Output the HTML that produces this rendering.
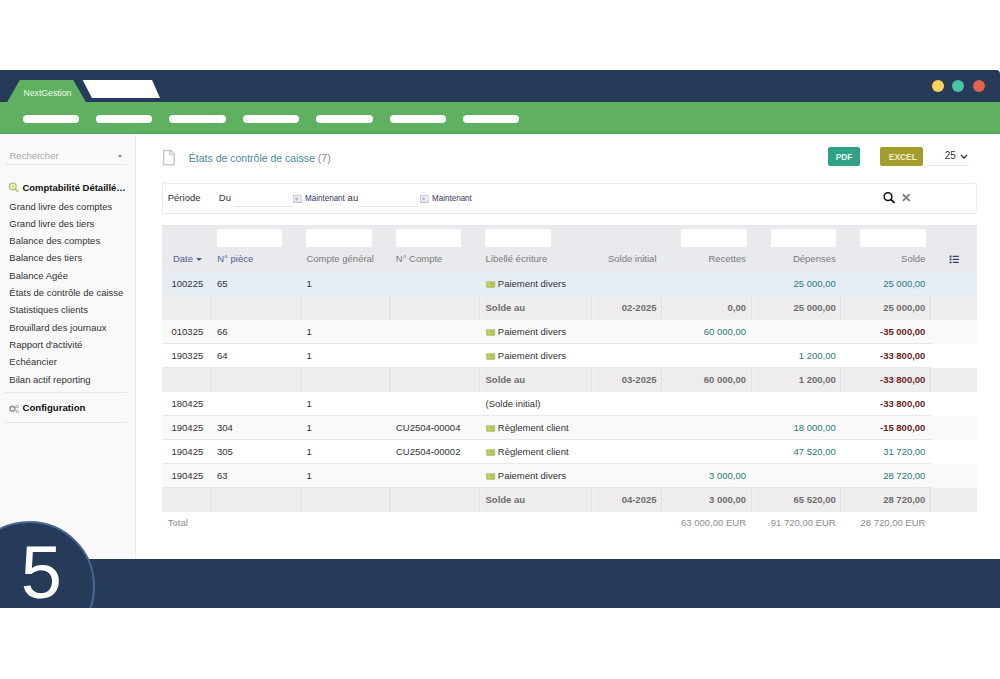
<!DOCTYPE html>
<html><head><meta charset="utf-8"><style>
*{box-sizing:border-box}
html,body{margin:0;padding:0}
body{width:1000px;height:679px;background:#fff;position:relative;overflow:hidden;font-family:"Liberation Sans",sans-serif;color:#333}
.a{position:absolute}
.t{position:absolute;line-height:1;white-space:nowrap}
.pill{position:absolute;top:114.8px;height:8.2px;width:56.4px;border-radius:4.1px;background:#fff}
.dot{position:absolute;width:12px;height:12px;border-radius:50%;top:79.6px}
</style></head><body>
<div class="a" style="left:0;top:70px;width:1000px;height:32px;background:#263a5a;border-top-right-radius:4px"></div>
<svg class="a" width="170" height="32" style="left:0;top:70px"><polygon points="7.2,32 19.8,10 73.2,10 85.9,32" fill="#5fb161"/><polygon points="82.6,10 152,10 160,28 92,28" fill="#fff"/></svg>
<div class="t" style="left:23.5px;top:88.54px;font-size:8.7px;color:#eaffe4;font-weight:400;">NextGestion</div>

<div class="dot" style="left:932px;background:#fdd05a"></div>
<div class="dot" style="left:952.2px;background:#4ac4a2"></div>
<div class="dot" style="left:973px;background:#e6604e"></div>
<div class="a" style="left:0;top:101.5px;width:1000px;height:32px;background:#5fb161"></div>
<div class="pill" style="left:22.6px"></div>
<div class="pill" style="left:96px"></div>
<div class="pill" style="left:169.4px"></div>
<div class="pill" style="left:242.8px"></div>
<div class="pill" style="left:316.2px"></div>
<div class="pill" style="left:389.6px"></div>
<div class="pill" style="left:463px"></div>
<div class="a" style="left:0;top:133.5px;width:1000px;height:426px;background:#fff"></div>
<div class="a" style="left:0;top:132px;width:1000px;height:1.5px;background:#5ba560"></div>
<div class="a" style="left:0;top:133.5px;width:135.5px;height:426px;background:#f9f9f9;border-right:1px solid #ebebeb;border-top:1px solid #fff"></div>
<div class="t" style="left:9.5px;top:150.86px;font-size:9.5px;color:#aaa;font-weight:400;">Rechercher</div>

<div class="a" style="left:118px;top:154.7px;width:0;height:0;border-left:2.5px solid transparent;border-right:2.5px solid transparent;border-top:3px solid #888"></div>
<div class="a" style="left:5.6px;top:164px;width:121px;height:1px;background:#e3e3e3"></div>
<svg class="a" style="left:7px;top:181px" width="13" height="13" viewBox="0 0 13 13"><circle cx="5.75" cy="5.5" r="3.4" fill="#f2f6c6" stroke="#b6bf74" stroke-width="1.4"/><path d="M8.2 8 L10.7 10.4" stroke="#b6bf74" stroke-width="1.7" stroke-linecap="round"/><path d="M5.2 4 V7 M6.3 4 V7" stroke="#c2c88a" stroke-width="0.7"/></svg>
<div class="t" style="left:22.4px;top:182.66px;font-size:9.5px;color:#111;font-weight:700;">Comptabilité Détaillé…</div>

<div class="t" style="left:9.3px;top:201.56px;font-size:9.5px;color:#333;font-weight:400;">Grand livre des comptes</div>

<div class="t" style="left:9.3px;top:218.87px;font-size:9.5px;color:#333;font-weight:400;">Grand livre des tiers</div>

<div class="t" style="left:9.3px;top:236.18px;font-size:9.5px;color:#333;font-weight:400;">Balance des comptes</div>

<div class="t" style="left:9.3px;top:253.49px;font-size:9.5px;color:#333;font-weight:400;">Balance des tiers</div>

<div class="t" style="left:9.3px;top:270.80px;font-size:9.5px;color:#333;font-weight:400;">Balance Agée</div>

<div class="t" style="left:9.3px;top:288.11px;font-size:9.5px;color:#333;font-weight:400;">États de contrôle de caisse</div>

<div class="t" style="left:9.3px;top:305.42px;font-size:9.5px;color:#333;font-weight:400;">Statistiques clients</div>

<div class="t" style="left:9.3px;top:322.73px;font-size:9.5px;color:#333;font-weight:400;">Brouillard des journaux</div>

<div class="t" style="left:9.3px;top:340.04px;font-size:9.5px;color:#333;font-weight:400;">Rapport d'activité</div>

<div class="t" style="left:9.3px;top:357.35px;font-size:9.5px;color:#333;font-weight:400;">Echéancier</div>

<div class="t" style="left:9.3px;top:374.66px;font-size:9.5px;color:#333;font-weight:400;">Bilan actif reporting</div>

<div class="a" style="left:5.2px;top:392.3px;width:122.3px;height:1px;background:#e6e6e6"></div>
<svg class="a" style="left:7px;top:401.5px" width="14" height="13" viewBox="0 0 14 13"><rect x="4.7" y="3.3" width="1.6" height="1.4" transform="rotate(0 5.5 6.8)" fill="#9a9a9a"/><rect x="4.7" y="3.3" width="1.6" height="1.4" transform="rotate(60 5.5 6.8)" fill="#9a9a9a"/><rect x="4.7" y="3.3" width="1.6" height="1.4" transform="rotate(120 5.5 6.8)" fill="#9a9a9a"/><rect x="4.7" y="3.3" width="1.6" height="1.4" transform="rotate(180 5.5 6.8)" fill="#9a9a9a"/><rect x="4.7" y="3.3" width="1.6" height="1.4" transform="rotate(240 5.5 6.8)" fill="#9a9a9a"/><rect x="4.7" y="3.3" width="1.6" height="1.4" transform="rotate(300 5.5 6.8)" fill="#9a9a9a"/><circle cx="5.5" cy="6.8" r="2.3" fill="none" stroke="#9a9a9a" stroke-width="1.5"/><circle cx="10.3" cy="4.4" r="1.25" fill="none" stroke="#a0a0a0" stroke-width="0.9"/><circle cx="10.3" cy="9.5" r="1.25" fill="none" stroke="#a0a0a0" stroke-width="0.9"/></svg>
<div class="t" style="left:22.5px;top:402.67px;font-size:9.6px;color:#111;font-weight:700;">Configuration</div>

<div class="a" style="left:5.2px;top:422px;width:122.3px;height:1px;background:#e6e6e6"></div>
<svg class="a" style="left:162px;top:149px" width="14" height="18" viewBox="0 0 14 18"><path d="M1.7 1.6 H8.9 L12.2 4.9 V15.8 H1.7 Z" fill="#fff" stroke="#c9c9c9" stroke-width="1.5" stroke-linejoin="round"/><path d="M7.9 1.8 V5.6 H12" fill="none" stroke="#c9c9c9" stroke-width="1.4"/></svg>
<div class="t" style="left:188.8px;top:152.61px;font-size:10.5px;color:#4a8c94;font-weight:400;">États de contrôle de caisse <span style="color:#8a8a8a">(7)</span></div>

<div class="a" style="left:828px;top:146.7px;width:32px;height:19.7px;background:#2fa285;border-radius:2px"></div>
<div class="t" style="left:844px;top:152.89px;font-size:8.4px;color:#e9f6ef;font-weight:700;transform:translateX(-50%)">PDF</div>

<div class="a" style="left:880px;top:146.7px;width:43.2px;height:19.7px;background:#a39e2c;border-radius:2px"></div>
<div class="t" style="left:902.8px;top:152.89px;font-size:8.4px;color:#f1efd4;font-weight:700;transform:translateX(-50%)">EXCEL</div>

<div class="t" style="left:944.8px;top:151.23px;font-size:10px;color:#333;font-weight:400;">25</div>

<svg class="a" style="left:960px;top:154px" width="8" height="5" viewBox="0 0 8 5"><path d="M1 1 L4 4 L7 1" fill="none" stroke="#333" stroke-width="1.4"/></svg>
<div class="a" style="left:929.3px;top:165px;width:40px;height:1px;background:#e5e5e5"></div>
<div class="a" style="left:162px;top:183px;width:815px;height:31px;border:1px dotted #d8d8d8;border-radius:2px"></div>
<div class="t" style="left:167.75px;top:193.46px;font-size:9.5px;color:#333;font-weight:400;">Période</div>

<div class="t" style="left:218.8px;top:193.46px;font-size:9.5px;color:#333;font-weight:400;">Du</div>

<div class="a" style="left:233.5px;top:206px;width:58px;height:1px;background:#e6e6e6;border-radius:1px"></div>
<svg class="a" style="left:292.6px;top:195px" width="9" height="8" viewBox="0 0 9 8"><rect x="0.5" y="0.5" width="7.8" height="7" fill="#eeebf3" stroke="#d2d0da" stroke-width="1"/><line x1="0.5" y1="7.3" x2="8.3" y2="7.3" stroke="#b9b8c0" stroke-width="0.8"/><circle cx="3.6" cy="3.8" r="1.6" fill="#cdb3d3"/></svg>
<div class="t" style="left:304.7px;top:194.05px;font-size:8.8px;color:#363a68;font-weight:400;transform:scaleX(0.915);transform-origin:0 0">Maintenant</div>

<div class="t" style="left:347.6px;top:193.46px;font-size:9.5px;color:#333;font-weight:400;">au</div>

<div class="a" style="left:361px;top:206px;width:57px;height:1px;background:#e6e6e6;border-radius:1px"></div>
<svg class="a" style="left:420px;top:195px" width="9" height="8" viewBox="0 0 9 8"><rect x="0.5" y="0.5" width="7.8" height="7" fill="#eeebf3" stroke="#d2d0da" stroke-width="1"/><line x1="0.5" y1="7.3" x2="8.3" y2="7.3" stroke="#b9b8c0" stroke-width="0.8"/><circle cx="3.6" cy="3.8" r="1.6" fill="#cdb3d3"/></svg>
<div class="t" style="left:432px;top:194.05px;font-size:8.8px;color:#363a68;font-weight:400;transform:scaleX(0.915);transform-origin:0 0">Maintenant</div>

<svg class="a" style="left:882px;top:190px" width="14" height="14" viewBox="0 0 14 14"><circle cx="6" cy="6.6" r="3.9" fill="none" stroke="#111" stroke-width="1.5"/><path d="M8.9 9.5 L12 12.3" stroke="#111" stroke-width="1.8" stroke-linecap="round"/></svg>
<svg class="a" style="left:901px;top:193px" width="10" height="9" viewBox="0 0 10 9"><path d="M1.8 1.2 L8.6 7.9 M8.6 1.2 L1.8 7.9" stroke="#858585" stroke-width="2"/></svg>
<div class="a" style="left:162px;top:225px;width:814.6px;height:46.5px;background:#e9eaee"></div>
<div class="a" style="left:216.7px;top:229.1px;width:65.7px;height:17.5px;background:#fff;border-radius:2px"></div>
<div class="a" style="left:306.4px;top:229.1px;width:65.6px;height:17.5px;background:#fff;border-radius:2px"></div>
<div class="a" style="left:395.8px;top:229.1px;width:65.2px;height:17.5px;background:#fff;border-radius:2px"></div>
<div class="a" style="left:484.9px;top:229.1px;width:66.0px;height:17.5px;background:#fff;border-radius:2px"></div>
<div class="a" style="left:681px;top:229.1px;width:65.6px;height:17.5px;background:#fff;border-radius:2px"></div>
<div class="a" style="left:770.7px;top:229.1px;width:65.5px;height:17.5px;background:#fff;border-radius:2px"></div>
<div class="a" style="left:860px;top:229.1px;width:66.0px;height:17.5px;background:#fff;border-radius:2px"></div>
<div class="t" style="left:172.9px;top:254.16px;font-size:9.5px;color:#575d8e;font-weight:400;">Date</div>

<div class="a" style="left:195.5px;top:257.8px;width:0;height:0;border-left:3px solid transparent;border-right:3px solid transparent;border-top:3.2px solid #555a78"></div>
<div class="t" style="left:217.2px;top:254.16px;font-size:9.5px;color:#575d8e;font-weight:400;">N° pièce</div>

<div class="t" style="left:306.4px;top:254.16px;font-size:9.5px;color:#7a7a7a;font-weight:400;">Compte général</div>

<div class="t" style="left:395.8px;top:254.16px;font-size:9.5px;color:#7a7a7a;font-weight:400;">N° Compte</div>

<div class="t" style="left:485.5px;top:254.16px;font-size:9.5px;color:#7a7a7a;font-weight:400;">Libellé écriture</div>

<div class="t" style="right:343.5px;top:254.16px;font-size:9.5px;color:#7a7a7a;font-weight:400;">Solde initial</div>

<div class="t" style="right:254px;top:254.16px;font-size:9.5px;color:#7a7a7a;font-weight:400;">Recettes</div>

<div class="t" style="right:164.29999999999995px;top:254.16px;font-size:9.5px;color:#7a7a7a;font-weight:400;">Dépenses</div>

<div class="t" style="right:74.60000000000002px;top:254.16px;font-size:9.5px;color:#7a7a7a;font-weight:400;">Solde</div>

<svg class="a" style="left:948.5px;top:255px" width="11" height="9" viewBox="0 0 11 9"><g fill="#343a6a"><rect x="0.6" y="0.5" width="1.9" height="1.9" rx="0.5"/><rect x="0.6" y="3.45" width="1.9" height="1.9" rx="0.5"/><rect x="0.6" y="6.4" width="1.9" height="1.9" rx="0.5"/><rect x="3.6" y="0.85" width="6.3" height="1.2" rx="0.6"/><rect x="3.6" y="3.8" width="6.3" height="1.2" rx="0.6"/><rect x="3.6" y="6.75" width="6.3" height="1.2" rx="0.6"/></g></svg>
<div class="a" style="left:162px;top:271.5px;width:814.6px;height:24px;background:#e6edf5"></div>
<div class="a" style="left:162px;top:294.5px;width:769px;height:1px;background:#e8e8e8"></div>
<div class="t" style="left:171.5px;top:278.66px;font-size:9.5px;color:#333;font-weight:400;">100225</div>

<div class="t" style="left:217px;top:278.66px;font-size:9.5px;color:#333;font-weight:400;">65</div>

<div class="t" style="left:306.6px;top:278.66px;font-size:9.5px;color:#333;font-weight:400;">1</div>

<svg class="a" style="left:485.5px;top:280.6px" width="10" height="7" viewBox="0 0 10 7"><rect x="0.2" y="0.2" width="9" height="6.6" rx="1" fill="#b2c05a"/><text x="1.2" y="5.4" font-size="5" fill="#d3df80" font-family="Liberation Sans">$</text><rect x="4.5" y="3.2" width="4" height="1.8" fill="#bccb66"/></svg>
<div class="t" style="left:497.8px;top:278.66px;font-size:9.5px;color:#333;font-weight:400;">Paiement divers</div>

<div class="t" style="right:164.29999999999995px;top:278.66px;font-size:9.5px;color:#2b7a76;font-weight:400;">25 000,00</div>

<div class="t" style="right:74.60000000000002px;top:278.66px;font-size:9.5px;color:#2b7a76;font-weight:400;">25 000,00</div>

<div class="a" style="left:162px;top:295.5px;width:814.6px;height:24px;background:#eeeced"></div>
<div class="a" style="left:211px;top:295.5px;width:1px;height:24px;background:#e3e2e2"></div><div class="a" style="left:212px;top:295.5px;width:1px;height:24px;background:#f3f2f2"></div>
<div class="a" style="left:301px;top:295.5px;width:1px;height:24px;background:#e3e2e2"></div><div class="a" style="left:302px;top:295.5px;width:1px;height:24px;background:#f3f2f2"></div>
<div class="a" style="left:390px;top:295.5px;width:1px;height:24px;background:#e3e2e2"></div><div class="a" style="left:391px;top:295.5px;width:1px;height:24px;background:#f3f2f2"></div>
<div class="a" style="left:479px;top:295.5px;width:1px;height:24px;background:#e3e2e2"></div><div class="a" style="left:480px;top:295.5px;width:1px;height:24px;background:#f3f2f2"></div>
<div class="a" style="left:591px;top:295.5px;width:1px;height:24px;background:#e3e2e2"></div><div class="a" style="left:592px;top:295.5px;width:1px;height:24px;background:#f3f2f2"></div>
<div class="a" style="left:661px;top:295.5px;width:1px;height:24px;background:#e3e2e2"></div><div class="a" style="left:662px;top:295.5px;width:1px;height:24px;background:#f3f2f2"></div>
<div class="a" style="left:751px;top:295.5px;width:1px;height:24px;background:#e3e2e2"></div><div class="a" style="left:752px;top:295.5px;width:1px;height:24px;background:#f3f2f2"></div>
<div class="a" style="left:840px;top:295.5px;width:1px;height:24px;background:#e3e2e2"></div><div class="a" style="left:841px;top:295.5px;width:1px;height:24px;background:#f3f2f2"></div>
<div class="a" style="left:930px;top:295.5px;width:1px;height:24px;background:#e3e2e2"></div><div class="a" style="left:931px;top:295.5px;width:1px;height:24px;background:#f3f2f2"></div>
<div class="t" style="left:485.5px;top:302.66px;font-size:9.5px;color:#6e6e6e;font-weight:700;">Solde au</div>

<div class="t" style="right:343.5px;top:302.66px;font-size:9.5px;color:#6e6e6e;font-weight:700;">02-2025</div>

<div class="t" style="right:254px;top:302.66px;font-size:9.5px;color:#6e6e6e;font-weight:700;">0,00</div>

<div class="t" style="right:164.29999999999995px;top:302.66px;font-size:9.5px;color:#6e6e6e;font-weight:700;">25 000,00</div>

<div class="t" style="right:74.60000000000002px;top:302.66px;font-size:9.5px;color:#6e6e6e;font-weight:700;">25 000,00</div>

<div class="a" style="left:162px;top:319.5px;width:814.6px;height:24px;background:#f9f9f9"></div>
<div class="a" style="left:162px;top:342.5px;width:769px;height:1px;background:#e8e8e8"></div>
<div class="t" style="left:171.5px;top:326.66px;font-size:9.5px;color:#333;font-weight:400;">010325</div>

<div class="t" style="left:217px;top:326.66px;font-size:9.5px;color:#333;font-weight:400;">66</div>

<div class="t" style="left:306.6px;top:326.66px;font-size:9.5px;color:#333;font-weight:400;">1</div>

<svg class="a" style="left:485.5px;top:328.6px" width="10" height="7" viewBox="0 0 10 7"><rect x="0.2" y="0.2" width="9" height="6.6" rx="1" fill="#b2c05a"/><text x="1.2" y="5.4" font-size="5" fill="#d3df80" font-family="Liberation Sans">$</text><rect x="4.5" y="3.2" width="4" height="1.8" fill="#bccb66"/></svg>
<div class="t" style="left:497.8px;top:326.66px;font-size:9.5px;color:#333;font-weight:400;">Paiement divers</div>

<div class="t" style="right:254px;top:326.66px;font-size:9.5px;color:#2b7a76;font-weight:400;">60 000,00</div>

<div class="t" style="right:74.60000000000002px;top:326.66px;font-size:9.5px;color:#6b1f22;font-weight:700;">-35 000,00</div>

<div class="a" style="left:162px;top:343.5px;width:814.6px;height:24px;background:#fff"></div>
<div class="a" style="left:162px;top:366.5px;width:769px;height:1px;background:#e8e8e8"></div>
<div class="t" style="left:171.5px;top:350.66px;font-size:9.5px;color:#333;font-weight:400;">190325</div>

<div class="t" style="left:217px;top:350.66px;font-size:9.5px;color:#333;font-weight:400;">64</div>

<div class="t" style="left:306.6px;top:350.66px;font-size:9.5px;color:#333;font-weight:400;">1</div>

<svg class="a" style="left:485.5px;top:352.6px" width="10" height="7" viewBox="0 0 10 7"><rect x="0.2" y="0.2" width="9" height="6.6" rx="1" fill="#b2c05a"/><text x="1.2" y="5.4" font-size="5" fill="#d3df80" font-family="Liberation Sans">$</text><rect x="4.5" y="3.2" width="4" height="1.8" fill="#bccb66"/></svg>
<div class="t" style="left:497.8px;top:350.66px;font-size:9.5px;color:#333;font-weight:400;">Paiement divers</div>

<div class="t" style="right:164.29999999999995px;top:350.66px;font-size:9.5px;color:#2b7a76;font-weight:400;">1 200,00</div>

<div class="t" style="right:74.60000000000002px;top:350.66px;font-size:9.5px;color:#6b1f22;font-weight:700;">-33 800,00</div>

<div class="a" style="left:162px;top:367.5px;width:814.6px;height:24px;background:#eeeced"></div>
<div class="a" style="left:211px;top:367.5px;width:1px;height:24px;background:#e3e2e2"></div><div class="a" style="left:212px;top:367.5px;width:1px;height:24px;background:#f3f2f2"></div>
<div class="a" style="left:301px;top:367.5px;width:1px;height:24px;background:#e3e2e2"></div><div class="a" style="left:302px;top:367.5px;width:1px;height:24px;background:#f3f2f2"></div>
<div class="a" style="left:390px;top:367.5px;width:1px;height:24px;background:#e3e2e2"></div><div class="a" style="left:391px;top:367.5px;width:1px;height:24px;background:#f3f2f2"></div>
<div class="a" style="left:479px;top:367.5px;width:1px;height:24px;background:#e3e2e2"></div><div class="a" style="left:480px;top:367.5px;width:1px;height:24px;background:#f3f2f2"></div>
<div class="a" style="left:591px;top:367.5px;width:1px;height:24px;background:#e3e2e2"></div><div class="a" style="left:592px;top:367.5px;width:1px;height:24px;background:#f3f2f2"></div>
<div class="a" style="left:661px;top:367.5px;width:1px;height:24px;background:#e3e2e2"></div><div class="a" style="left:662px;top:367.5px;width:1px;height:24px;background:#f3f2f2"></div>
<div class="a" style="left:751px;top:367.5px;width:1px;height:24px;background:#e3e2e2"></div><div class="a" style="left:752px;top:367.5px;width:1px;height:24px;background:#f3f2f2"></div>
<div class="a" style="left:840px;top:367.5px;width:1px;height:24px;background:#e3e2e2"></div><div class="a" style="left:841px;top:367.5px;width:1px;height:24px;background:#f3f2f2"></div>
<div class="a" style="left:930px;top:367.5px;width:1px;height:24px;background:#e3e2e2"></div><div class="a" style="left:931px;top:367.5px;width:1px;height:24px;background:#f3f2f2"></div>
<div class="t" style="left:485.5px;top:374.66px;font-size:9.5px;color:#6e6e6e;font-weight:700;">Solde au</div>

<div class="t" style="right:343.5px;top:374.66px;font-size:9.5px;color:#6e6e6e;font-weight:700;">03-2025</div>

<div class="t" style="right:254px;top:374.66px;font-size:9.5px;color:#6e6e6e;font-weight:700;">60 000,00</div>

<div class="t" style="right:164.29999999999995px;top:374.66px;font-size:9.5px;color:#6e6e6e;font-weight:700;">1 200,00</div>

<div class="t" style="right:74.60000000000002px;top:374.66px;font-size:9.5px;color:#6b1f22;font-weight:700;">-33 800,00</div>

<div class="a" style="left:162px;top:391.5px;width:814.6px;height:24px;background:#fff"></div>
<div class="a" style="left:162px;top:414.5px;width:769px;height:1px;background:#e8e8e8"></div>
<div class="t" style="left:171.5px;top:398.66px;font-size:9.5px;color:#333;font-weight:400;">180425</div>

<div class="t" style="left:306.6px;top:398.66px;font-size:9.5px;color:#333;font-weight:400;">1</div>

<div class="t" style="left:485.5px;top:398.66px;font-size:9.5px;color:#333;font-weight:400;">(Solde initial)</div>

<div class="t" style="right:74.60000000000002px;top:398.66px;font-size:9.5px;color:#6b1f22;font-weight:700;">-33 800,00</div>

<div class="a" style="left:162px;top:415.5px;width:814.6px;height:24px;background:#f9f9f9"></div>
<div class="a" style="left:162px;top:438.5px;width:769px;height:1px;background:#e8e8e8"></div>
<div class="t" style="left:171.5px;top:422.66px;font-size:9.5px;color:#333;font-weight:400;">190425</div>

<div class="t" style="left:217px;top:422.66px;font-size:9.5px;color:#333;font-weight:400;">304</div>

<div class="t" style="left:306.6px;top:422.66px;font-size:9.5px;color:#333;font-weight:400;">1</div>

<div class="t" style="left:396px;top:422.66px;font-size:9.5px;color:#333;font-weight:400;">CU2504-00004</div>

<svg class="a" style="left:485.5px;top:424.6px" width="10" height="7" viewBox="0 0 10 7"><rect x="0.2" y="0.2" width="9" height="6.6" rx="1" fill="#b2c05a"/><text x="1.2" y="5.4" font-size="5" fill="#d3df80" font-family="Liberation Sans">$</text><rect x="4.5" y="3.2" width="4" height="1.8" fill="#bccb66"/></svg>
<div class="t" style="left:497.8px;top:422.66px;font-size:9.5px;color:#333;font-weight:400;">Règlement client</div>

<div class="t" style="right:164.29999999999995px;top:422.66px;font-size:9.5px;color:#2b7a76;font-weight:400;">18 000,00</div>

<div class="t" style="right:74.60000000000002px;top:422.66px;font-size:9.5px;color:#6b1f22;font-weight:700;">-15 800,00</div>

<div class="a" style="left:162px;top:439.5px;width:814.6px;height:24px;background:#fff"></div>
<div class="a" style="left:162px;top:462.5px;width:769px;height:1px;background:#e8e8e8"></div>
<div class="t" style="left:171.5px;top:446.66px;font-size:9.5px;color:#333;font-weight:400;">190425</div>

<div class="t" style="left:217px;top:446.66px;font-size:9.5px;color:#333;font-weight:400;">305</div>

<div class="t" style="left:306.6px;top:446.66px;font-size:9.5px;color:#333;font-weight:400;">1</div>

<div class="t" style="left:396px;top:446.66px;font-size:9.5px;color:#333;font-weight:400;">CU2504-00002</div>

<svg class="a" style="left:485.5px;top:448.6px" width="10" height="7" viewBox="0 0 10 7"><rect x="0.2" y="0.2" width="9" height="6.6" rx="1" fill="#b2c05a"/><text x="1.2" y="5.4" font-size="5" fill="#d3df80" font-family="Liberation Sans">$</text><rect x="4.5" y="3.2" width="4" height="1.8" fill="#bccb66"/></svg>
<div class="t" style="left:497.8px;top:446.66px;font-size:9.5px;color:#333;font-weight:400;">Règlement client</div>

<div class="t" style="right:164.29999999999995px;top:446.66px;font-size:9.5px;color:#2b7a76;font-weight:400;">47 520,00</div>

<div class="t" style="right:74.60000000000002px;top:446.66px;font-size:9.5px;color:#2b7a76;font-weight:400;">31 720,00</div>

<div class="a" style="left:162px;top:463.5px;width:814.6px;height:24px;background:#f9f9f9"></div>
<div class="a" style="left:162px;top:486.5px;width:769px;height:1px;background:#e8e8e8"></div>
<div class="t" style="left:171.5px;top:470.66px;font-size:9.5px;color:#333;font-weight:400;">190425</div>

<div class="t" style="left:217px;top:470.66px;font-size:9.5px;color:#333;font-weight:400;">63</div>

<div class="t" style="left:306.6px;top:470.66px;font-size:9.5px;color:#333;font-weight:400;">1</div>

<svg class="a" style="left:485.5px;top:472.6px" width="10" height="7" viewBox="0 0 10 7"><rect x="0.2" y="0.2" width="9" height="6.6" rx="1" fill="#b2c05a"/><text x="1.2" y="5.4" font-size="5" fill="#d3df80" font-family="Liberation Sans">$</text><rect x="4.5" y="3.2" width="4" height="1.8" fill="#bccb66"/></svg>
<div class="t" style="left:497.8px;top:470.66px;font-size:9.5px;color:#333;font-weight:400;">Paiement divers</div>

<div class="t" style="right:254px;top:470.66px;font-size:9.5px;color:#2b7a76;font-weight:400;">3 000,00</div>

<div class="t" style="right:74.60000000000002px;top:470.66px;font-size:9.5px;color:#2b7a76;font-weight:400;">28 720,00</div>

<div class="a" style="left:162px;top:487.5px;width:814.6px;height:24px;background:#eeeced"></div>
<div class="a" style="left:211px;top:487.5px;width:1px;height:24px;background:#e3e2e2"></div><div class="a" style="left:212px;top:487.5px;width:1px;height:24px;background:#f3f2f2"></div>
<div class="a" style="left:301px;top:487.5px;width:1px;height:24px;background:#e3e2e2"></div><div class="a" style="left:302px;top:487.5px;width:1px;height:24px;background:#f3f2f2"></div>
<div class="a" style="left:390px;top:487.5px;width:1px;height:24px;background:#e3e2e2"></div><div class="a" style="left:391px;top:487.5px;width:1px;height:24px;background:#f3f2f2"></div>
<div class="a" style="left:479px;top:487.5px;width:1px;height:24px;background:#e3e2e2"></div><div class="a" style="left:480px;top:487.5px;width:1px;height:24px;background:#f3f2f2"></div>
<div class="a" style="left:591px;top:487.5px;width:1px;height:24px;background:#e3e2e2"></div><div class="a" style="left:592px;top:487.5px;width:1px;height:24px;background:#f3f2f2"></div>
<div class="a" style="left:661px;top:487.5px;width:1px;height:24px;background:#e3e2e2"></div><div class="a" style="left:662px;top:487.5px;width:1px;height:24px;background:#f3f2f2"></div>
<div class="a" style="left:751px;top:487.5px;width:1px;height:24px;background:#e3e2e2"></div><div class="a" style="left:752px;top:487.5px;width:1px;height:24px;background:#f3f2f2"></div>
<div class="a" style="left:840px;top:487.5px;width:1px;height:24px;background:#e3e2e2"></div><div class="a" style="left:841px;top:487.5px;width:1px;height:24px;background:#f3f2f2"></div>
<div class="a" style="left:930px;top:487.5px;width:1px;height:24px;background:#e3e2e2"></div><div class="a" style="left:931px;top:487.5px;width:1px;height:24px;background:#f3f2f2"></div>
<div class="t" style="left:485.5px;top:494.66px;font-size:9.5px;color:#6e6e6e;font-weight:700;">Solde au</div>

<div class="t" style="right:343.5px;top:494.66px;font-size:9.5px;color:#6e6e6e;font-weight:700;">04-2025</div>

<div class="t" style="right:254px;top:494.66px;font-size:9.5px;color:#6e6e6e;font-weight:700;">3 000,00</div>

<div class="t" style="right:164.29999999999995px;top:494.66px;font-size:9.5px;color:#6e6e6e;font-weight:700;">65 520,00</div>

<div class="t" style="right:74.60000000000002px;top:494.66px;font-size:9.5px;color:#6e6e6e;font-weight:700;">28 720,00</div>

<div class="t" style="left:167.75px;top:518.46px;font-size:9.5px;color:#8e8e8e;font-weight:400;">Total</div>

<div class="t" style="right:254px;top:518.46px;font-size:9.5px;color:#8e8e8e;font-weight:400;">63 000,00 EUR</div>

<div class="t" style="right:164.29999999999995px;top:518.46px;font-size:9.5px;color:#8e8e8e;font-weight:400;">91 720,00 EUR</div>

<div class="t" style="right:74.60000000000002px;top:518.46px;font-size:9.5px;color:#8e8e8e;font-weight:400;">28 720,00 EUR</div>

<div class="a" style="left:0;top:559px;width:1000px;height:48.5px;background:#263a5a"></div>
<div class="a" style="left:0;top:500px;width:200px;height:107.5px;overflow:hidden"><div class="a" style="left:-36.5px;top:21px;width:131px;height:131px;border-radius:50%;background:#263a5a;border:2px solid #4a6794"></div></div>
<div class="t" style="left:20.8px;top:535.86px;font-size:74px;color:#fff;font-weight:400;">5</div>

</body></html>
